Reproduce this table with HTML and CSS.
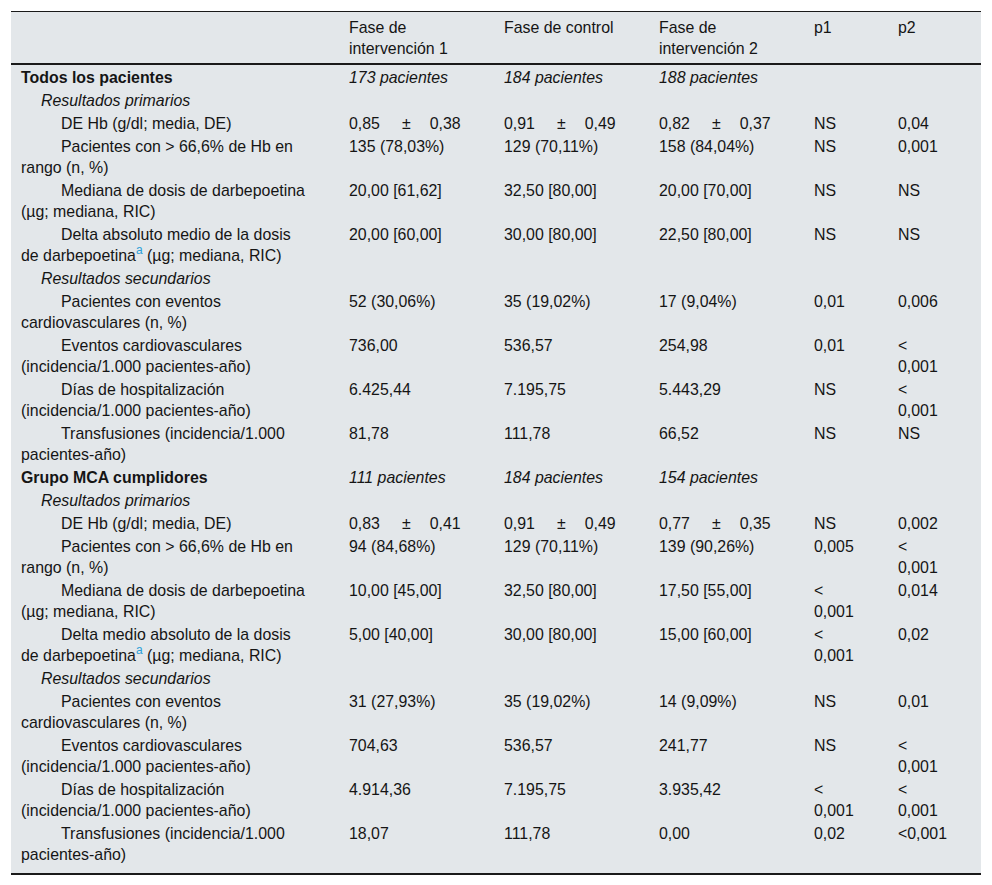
FILE: index.html
```html
<!DOCTYPE html>
<html lang="es">
<head>
<meta charset="utf-8">
<title>Tabla</title>
<link rel="stylesheet" href="styles.css">
</head>
<body>
<div class="wrap">
<table class="tbl">
  <colgroup>
    <col class="c1"><col class="c2"><col class="c3"><col class="c4"><col class="c5"><col class="c6">
  </colgroup>
  <thead>
    <tr>
      <th></th>
      <th>Fase de<br>intervención 1</th>
      <th>Fase de control</th>
      <th>Fase de<br>intervención 2</th>
      <th>p1</th>
      <th>p2</th>
    </tr>
  </thead>
  <tbody>
    <tr>
      <td class="l0">Todos los pacientes</td>
      <td class="it">173 pacientes</td>
      <td class="it">184 pacientes</td>
      <td class="it">188 pacientes</td>
      <td></td><td></td>
    </tr>
    <tr><td class="l1">Resultados primarios</td><td></td><td></td><td></td><td></td><td></td></tr>
    <tr>
      <td class="l2">DE Hb (g/dl; media, DE)</td>
      <td>0,85<span class="pm">±</span>0,38</td>
      <td>0,91<span class="pm">±</span>0,49</td>
      <td>0,82<span class="pm">±</span>0,37</td>
      <td>NS</td><td>0,04</td>
    </tr>
    <tr>
      <td class="l2">Pacientes con &gt; 66,6% de Hb en<br>rango (n, %)</td>
      <td>135 (78,03%)</td><td>129 (70,11%)</td><td>158 (84,04%)</td>
      <td>NS</td><td>0,001</td>
    </tr>
    <tr>
      <td class="l2">Mediana de dosis de darbepoetina<br>(µg; mediana, RIC)</td>
      <td>20,00 [61,62]</td><td>32,50 [80,00]</td><td>20,00 [70,00]</td>
      <td>NS</td><td>NS</td>
    </tr>
    <tr>
      <td class="l2">Delta absoluto medio de la dosis<br>de darbepoetina<sup class="fn">a</sup> (µg; mediana, RIC)</td>
      <td>20,00 [60,00]</td><td>30,00 [80,00]</td><td>22,50 [80,00]</td>
      <td>NS</td><td>NS</td>
    </tr>
    <tr><td class="l1">Resultados secundarios</td><td></td><td></td><td></td><td></td><td></td></tr>
    <tr>
      <td class="l2">Pacientes con eventos<br>cardiovasculares (n, %)</td>
      <td>52 (30,06%)</td><td>35 (19,02%)</td><td>17 (9,04%)</td>
      <td>0,01</td><td>0,006</td>
    </tr>
    <tr>
      <td class="l2">Eventos cardiovasculares<br>(incidencia/1.000 pacientes-año)</td>
      <td>736,00</td><td>536,57</td><td>254,98</td>
      <td>0,01</td><td>&lt;<br>0,001</td>
    </tr>
    <tr>
      <td class="l2">Días de hospitalización<br>(incidencia/1.000 pacientes-año)</td>
      <td>6.425,44</td><td>7.195,75</td><td>5.443,29</td>
      <td>NS</td><td>&lt;<br>0,001</td>
    </tr>
    <tr>
      <td class="l2">Transfusiones (incidencia/1.000<br>pacientes-año)</td>
      <td>81,78</td><td>111,78</td><td>66,52</td>
      <td>NS</td><td>NS</td>
    </tr>
    <tr>
      <td class="l0">Grupo MCA cumplidores</td>
      <td class="it">111 pacientes</td>
      <td class="it">184 pacientes</td>
      <td class="it">154 pacientes</td>
      <td></td><td></td>
    </tr>
    <tr><td class="l1">Resultados primarios</td><td></td><td></td><td></td><td></td><td></td></tr>
    <tr>
      <td class="l2">DE Hb (g/dl; media, DE)</td>
      <td>0,83<span class="pm">±</span>0,41</td>
      <td>0,91<span class="pm">±</span>0,49</td>
      <td>0,77<span class="pm">±</span>0,35</td>
      <td>NS</td><td>0,002</td>
    </tr>
    <tr>
      <td class="l2">Pacientes con &gt; 66,6% de Hb en<br>rango (n, %)</td>
      <td>94 (84,68%)</td><td>129 (70,11%)</td><td>139 (90,26%)</td>
      <td>0,005</td><td>&lt;<br>0,001</td>
    </tr>
    <tr>
      <td class="l2">Mediana de dosis de darbepoetina<br>(µg; mediana, RIC)</td>
      <td>10,00 [45,00]</td><td>32,50 [80,00]</td><td>17,50 [55,00]</td>
      <td>&lt;<br>0,001</td><td>0,014</td>
    </tr>
    <tr>
      <td class="l2">Delta medio absoluto de la dosis<br>de darbepoetina<sup class="fn">a</sup> (µg; mediana, RIC)</td>
      <td>5,00 [40,00]</td><td>30,00 [80,00]</td><td>15,00 [60,00]</td>
      <td>&lt;<br>0,001</td><td>0,02</td>
    </tr>
    <tr><td class="l1">Resultados secundarios</td><td></td><td></td><td></td><td></td><td></td></tr>
    <tr>
      <td class="l2">Pacientes con eventos<br>cardiovasculares (n, %)</td>
      <td>31 (27,93%)</td><td>35 (19,02%)</td><td>14 (9,09%)</td>
      <td>NS</td><td>0,01</td>
    </tr>
    <tr>
      <td class="l2">Eventos cardiovasculares<br>(incidencia/1.000 pacientes-año)</td>
      <td>704,63</td><td>536,57</td><td>241,77</td>
      <td>NS</td><td>&lt;<br>0,001</td>
    </tr>
    <tr>
      <td class="l2">Días de hospitalización<br>(incidencia/1.000 pacientes-año)</td>
      <td>4.914,36</td><td>7.195,75</td><td>3.935,42</td>
      <td>&lt;<br>0,001</td><td>&lt;<br>0,001</td>
    </tr>
    <tr class="last">
      <td class="l2">Transfusiones (incidencia/1.000<br>pacientes-año)</td>
      <td>18,07</td><td>111,78</td><td>0,00</td>
      <td>0,02</td><td>&lt;0,001</td>
    </tr>
  </tbody>
</table>
</div>
</body>
</html>
```
FILE: styles.css
```css
html, body {
  margin: 0;
  padding: 0;
  background: #ffffff;
}

.wrap {
  padding: 11px 11px 0 11px;
}

.tbl {
  width: 970px;
  border-collapse: collapse;
  table-layout: fixed;
  background: #e3e7ea;
  font-family: "Liberation Sans", Arial, sans-serif;
  font-size: 15.9px;
  line-height: 21px;
  color: #151515;
  border-top: 1px solid #1a1a1a;
  border-bottom: 2px solid #1a1a1a;
}

.c1 { width: 328px; }
.c2 { width: 155px; }
.c3 { width: 155px; }
.c4 { width: 155px; }
.c5 { width: 84px; }
.c6 { width: 93px; }

.tbl th {
  font-weight: normal;
  text-align: left;
  vertical-align: top;
  padding: 5px 10px 4px 10px;
  border-bottom: 2px solid #1a1a1a;
}

.tbl td {
  text-align: left;
  vertical-align: top;
  padding: 2px 10px 0 10px;
}

.tbl tr.last td {
  padding-bottom: 8px;
}

.l0 {
  font-weight: bold;
}

.l1 {
  font-style: italic;
  text-indent: 20px;
}

.l2 {
  text-indent: 40px;
}

.it {
  font-style: italic;
}

.pm {
  margin: 0 19px 0 22px;
}

.fn {
  color: #2a9fd8;
  font-size: 12px;
  line-height: 0;
  vertical-align: 7px;
}
```
